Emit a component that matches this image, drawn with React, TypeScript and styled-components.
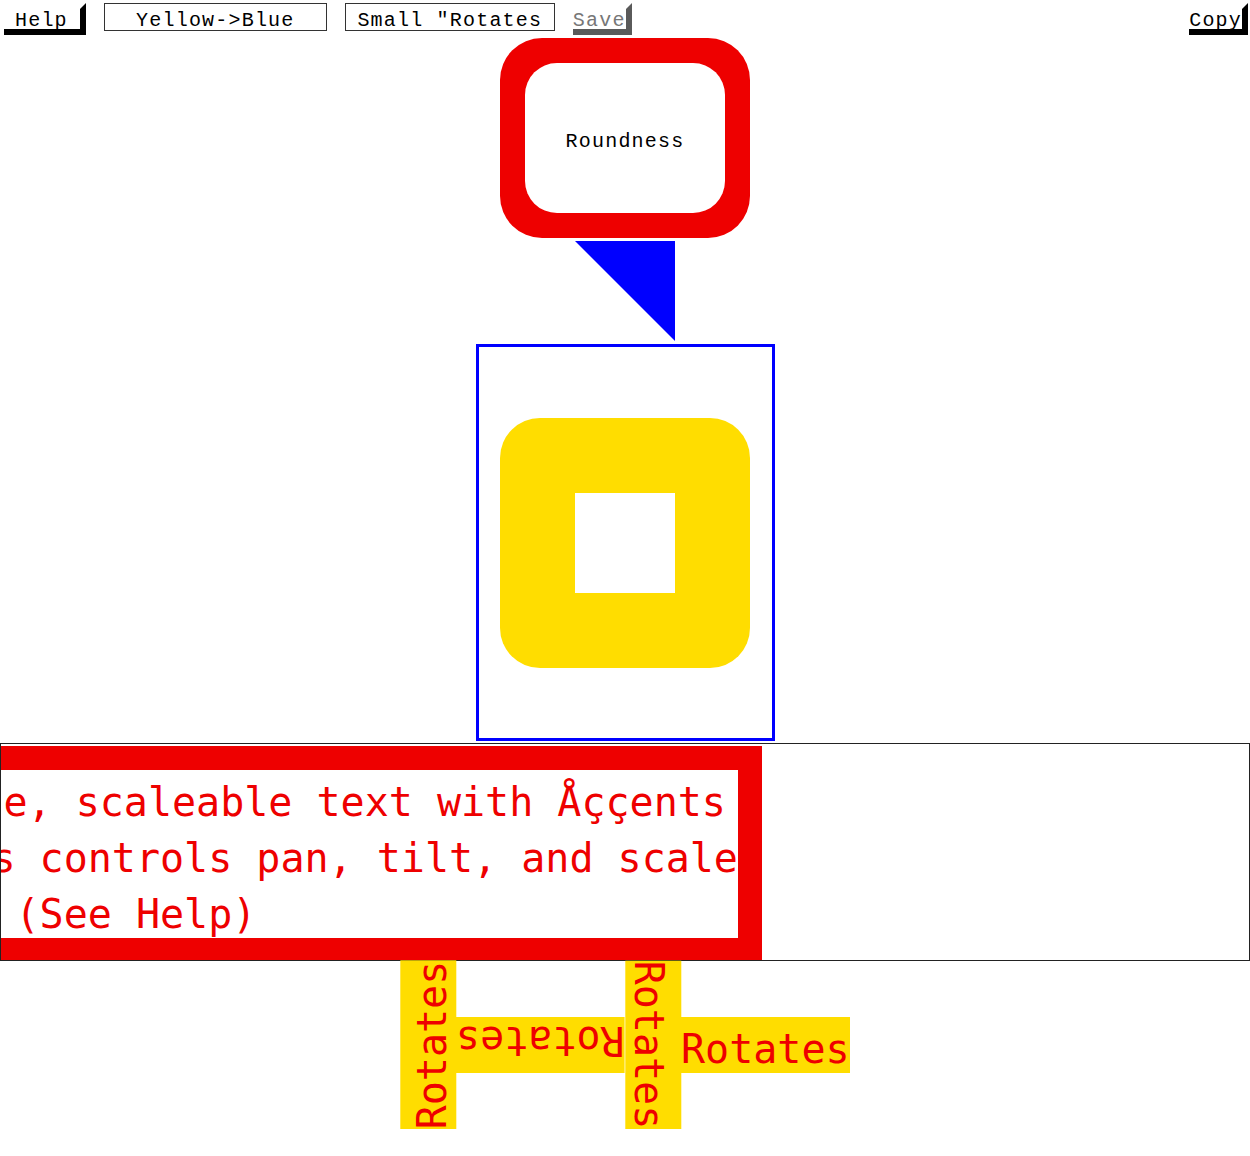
import styled, { createGlobalStyle } from "styled-components";

const RED = "#ee0000";
const YELLOW = "#ffdd00";
const BLUE = "#0000ff";

const GlobalStyle = createGlobalStyle`
  html, body {
    margin: 0;
    padding: 0;
    background: #fff;
  }
  body {
    font-family: "Liberation Mono", monospace;
  }
`;

const Page = styled.div`
  width: 1250px;
  display: flex;
  flex-direction: column;
`;

const Toolbar = styled.div`
  display: flex;
  align-items: flex-start;
  gap: 18px;
  padding: 3px 2px 0 4px;
  height: 35px;
  box-sizing: border-box;
`;

const ShadowButton = styled.button<{ $muted?: boolean; $padL?: number; $padR?: number; $right?: boolean }>`
  appearance: none;
  background: #fff;
  margin: 0;
  margin-left: ${(p) => (p.$right ? "auto" : "0")};
  font-family: "Liberation Mono", monospace;
  font-size: 20px;
  letter-spacing: 1.2px;
  color: ${(p) => (p.$muted ? "#777" : "#000")};
  border: 0;
  border-top: 6px solid transparent;
  border-right: 6px solid ${(p) => (p.$muted ? "#5a5a5a" : "#000")};
  border-bottom: 6px solid ${(p) => (p.$muted ? "#5a5a5a" : "#000")};
  padding: 3px ${(p) => p.$padR ?? 0}px 0 ${(p) => p.$padL ?? 0}px;
  line-height: 17px;
  height: 32px;
  box-sizing: border-box;
  white-space: pre;
  cursor: pointer;
`;

const FlatButton = styled.button<{ $width: number }>`
  appearance: none;
  background: #fff;
  margin: 0;
  width: ${(p) => p.$width}px;
  height: 28px;
  box-sizing: border-box;
  border: 1px solid #333;
  padding: 7px 0 0;
  line-height: 19px;
  font-family: "Liberation Mono", monospace;
  font-size: 20px;
  letter-spacing: 1.2px;
  color: #000;
  text-align: center;
  white-space: pre;
  cursor: pointer;
`;

const Stage = styled.div`
  display: flex;
  flex-direction: column;
  align-items: center;
`;

const RoundFrame = styled.div`
  margin-top: 3px;
  width: 250px;
  height: 200px;
  box-sizing: border-box;
  padding: 25px;
  background: ${RED};
  border-radius: 42px;
`;

const RoundInner = styled.div`
  height: 100%;
  background: #fff;
  border-radius: 32px;
  display: flex;
  align-items: center;
  justify-content: center;
  padding-top: 7px;
  box-sizing: border-box;
  font-family: "Liberation Mono", monospace;
  font-size: 20px;
  letter-spacing: 1.2px;
  color: #000;
`;

const Pointer = styled.div`
  margin-top: 3px;
  width: 0;
  height: 0;
  border-top: 100px solid ${BLUE};
  border-left: 100px solid transparent;
`;

const ViewBox = styled.div`
  margin-top: 3px;
  width: 299px;
  height: 397px;
  box-sizing: border-box;
  border: 3px solid ${BLUE};
  display: flex;
  align-items: center;
  justify-content: center;
`;

const YellowTile = styled.div`
  width: 250px;
  height: 250px;
  background: ${YELLOW};
  border-radius: 40px;
  display: flex;
  align-items: center;
  justify-content: center;
`;

const TileHole = styled.div`
  width: 100px;
  height: 100px;
  background: #fff;
`;

const TextPanel = styled.div`
  margin-top: 2px;
  width: 100%;
  height: 218px;
  box-sizing: border-box;
  border: 1px solid #222;
  overflow: hidden;
`;

const TextFrame = styled.div`
  margin: 2px 0 0 -154px;
  width: fit-content;
  border: 24px solid ${RED};
  background: #fff;
  font-family: "DejaVu Sans Mono", monospace;
  font-size: 40px;
  color: ${RED};
`;

const TextLine = styled.div<{ $align?: "left" | "center" }>`
  height: 56px;
  box-sizing: border-box;
  padding-top: 9px;
  line-height: 47px;
  white-space: pre;
  text-align: ${(p) => p.$align ?? "center"};
`;

const RotateRow = styled.div`
  display: flex;
  justify-content: center;
  align-items: center;
  height: 168px;
`;

const RotateSlot = styled.div<{ $upright: boolean }>`
  width: ${(p) => (p.$upright ? 56 : 168.6)}px;
  height: ${(p) => (p.$upright ? 168 : 56)}px;
  display: flex;
  align-items: center;
  justify-content: center;
  flex-shrink: 0;
`;

const RotateLabel = styled.div<{ $deg: number }>`
  flex-shrink: 0;
  width: 168.6px;
  height: 56px;
  box-sizing: border-box;
  padding-top: 9px;
  line-height: 47px;
  background: ${YELLOW};
  color: ${RED};
  font-family: "DejaVu Sans Mono", monospace;
  font-size: 40px;
  white-space: nowrap;
  transform: rotate(${(p) => p.$deg}deg);
`;

const rotations = [-90, 180, 90, 0];

export default function App() {
  return (
    <Page>
      <GlobalStyle />
      <Toolbar>
        <ShadowButton $padL={11} $padR={12}>Help</ShadowButton>
        <FlatButton $width={223}>Yellow-&gt;Blue</FlatButton>
        <FlatButton $width={210}>Small "Rotates</FlatButton>
        <ShadowButton $muted>Save</ShadowButton>
        <ShadowButton $right>Copy</ShadowButton>
      </Toolbar>
      <Stage>
        <RoundFrame>
          <RoundInner>Roundness</RoundInner>
        </RoundFrame>
        <Pointer />
        <ViewBox>
          <YellowTile>
            <TileHole />
          </YellowTile>
        </ViewBox>
      </Stage>
      <TextPanel>
        <TextFrame>
          <TextLine>Simple, scaleable text with Åççents</TextLine>
          <TextLine>Arrows controls pan, tilt, and scale</TextLine>
          <TextLine $align="left">{"      (See Help)"}</TextLine>
        </TextFrame>
      </TextPanel>
      <RotateRow>
        {rotations.map((deg, i) => (
          <RotateSlot key={i} $upright={deg === 90 || deg === -90}>
            <RotateLabel $deg={deg}>Rotates</RotateLabel>
          </RotateSlot>
        ))}
      </RotateRow>
    </Page>
  );
}
